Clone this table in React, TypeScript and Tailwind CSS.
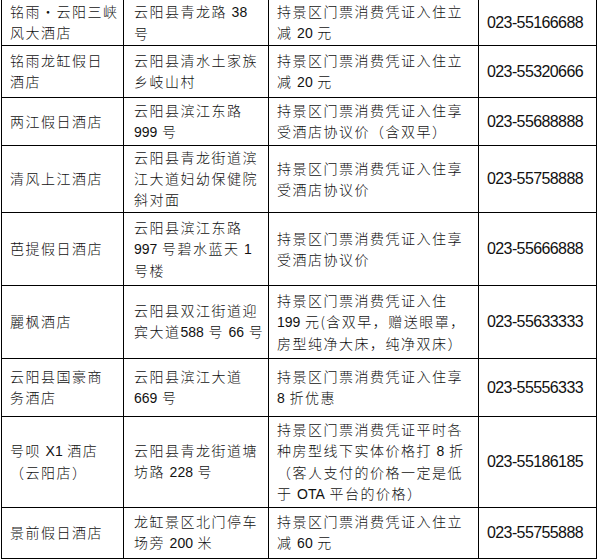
import React from "react";

type Row = { h: number; c1: string[]; c2: string[]; c3: string[]; tel: string };

const rows: Row[] = [
  { h: 45, c1: ["铭雨•云阳三峡", "风大酒店"], c2: ["云阳县青龙路 38", "号"], c3: ["持景区门票消费凭证入住立", "减 20 元"], tel: "023-55166688" },
  { h: 52, c1: ["铭雨龙缸假日", "酒店"], c2: ["云阳县清水土家族", "乡岐山村"], c3: ["持景区门票消费凭证入住立", "减 20 元"], tel: "023-55320666" },
  { h: 48, c1: ["两江假日酒店"], c2: ["云阳县滨江东路", "999 号"], c3: ["持景区门票消费凭证入住享", "受酒店协议价（含双早）"], tel: "023-55688888" },
  { h: 67, c1: ["清风上江酒店"], c2: ["云阳县青龙街道滨", "江大道妇幼保健院", "斜对面"], c3: ["持景区门票消费凭证入住享", "受酒店协议价"], tel: "023-55758888" },
  { h: 73, c1: ["芭提假日酒店"], c2: ["云阳县滨江东路", "997 号碧水蓝天 1", "号楼"], c3: ["持景区门票消费凭证入住享", "受酒店协议价"], tel: "023-55666888" },
  { h: 73, c1: ["麗枫酒店"], c2: ["云阳县双江街道迎", "宾大道588 号 66 号"], c3: ["持景区门票消费凭证入住", "199 元(含双早，赠送眼罩，", "房型纯净大床，纯净双床）"], tel: "023-55633333" },
  { h: 58, c1: ["云阳县国豪商", "务酒店"], c2: ["云阳县滨江大道", "669 号"], c3: ["持景区门票消费凭证入住享", "8 折优惠"], tel: "023-55556333" },
  { h: 91, c1: ["号呗 X1 酒店", "（云阳店）"], c2: ["云阳县青龙街道塘", "坊路 228 号"], c3: ["持景区门票消费凭证平时各", "种房型线下实体价格打 8 折", "（客人支付的价格一定是低", "于 OTA 平台的价格）"], tel: "023-55186185" },
  { h: 51, c1: ["景前假日酒店"], c2: ["龙缸景区北门停车", "场旁 200 米"], c3: ["持景区门票消费凭证入住立", "减 60 元"], tel: "023-55755888" },
];

function Line({ text }: { text: string }) {
  const parts = text.split(/([0-9A-Za-z]+)/);
  return (
    <div className="whitespace-nowrap">
      {parts.map((p, i) =>
        /^[0-9A-Za-z]+$/.test(p) ? (
          <span key={i} className="tracking-normal text-[14px] font-normal font-['Liberation_Sans',sans-serif]">
            {p}
          </span>
        ) : (
          <span key={i}>{p}</span>
        )
      )}
    </div>
  );
}

function Cell({ lines, first }: { lines: string[]; first: boolean }) {
  return (
    <td
      className={`border border-black align-middle px-2 py-0 text-[14px] font-light leading-[21px] tracking-[1.5px] text-[#111] ${
        first ? "border-t-0" : ""
      }`}
    >
      {lines.map((l, i) => (
        <Line key={i} text={l} />
      ))}
    </td>
  );
}

export default function App() {
  return (
    <div className="w-[597px] h-[560px] bg-white overflow-hidden font-['Noto_Sans_CJK_SC',sans-serif]">
      <table className="table-fixed border-collapse ml-[1px] w-[595px]">
        <colgroup>
          <col className="w-[122px]" />
          <col className="w-[145px]" />
          <col className="w-[210px]" />
          <col className="w-[118px]" />
        </colgroup>
        <tbody>
          {rows.map((r, i) => (
            <tr key={i} style={{ height: r.h }}>
              <Cell lines={r.c1} first={i === 0} />
              <td
                className={`border border-black align-middle pl-[10px] pr-1 py-0 text-[14px] font-light leading-[21px] tracking-[1.5px] text-[#111] ${
                  i === 0 ? "border-t-0" : ""
                }`}
              >
                {r.c2.map((l, j) => (
                  <Line key={j} text={l} />
                ))}
              </td>
              <Cell lines={r.c3} first={i === 0} />
              <td
                className={`border border-black align-middle pl-2 pr-0 py-0 text-[16px] tracking-[-0.6px] leading-[21px] text-[#111] font-['Liberation_Sans',sans-serif] ${
                  i === 0 ? "border-t-0" : ""
                }`}
              >
                {r.tel}
              </td>
            </tr>
          ))}
        </tbody>
      </table>
    </div>
  );
}
